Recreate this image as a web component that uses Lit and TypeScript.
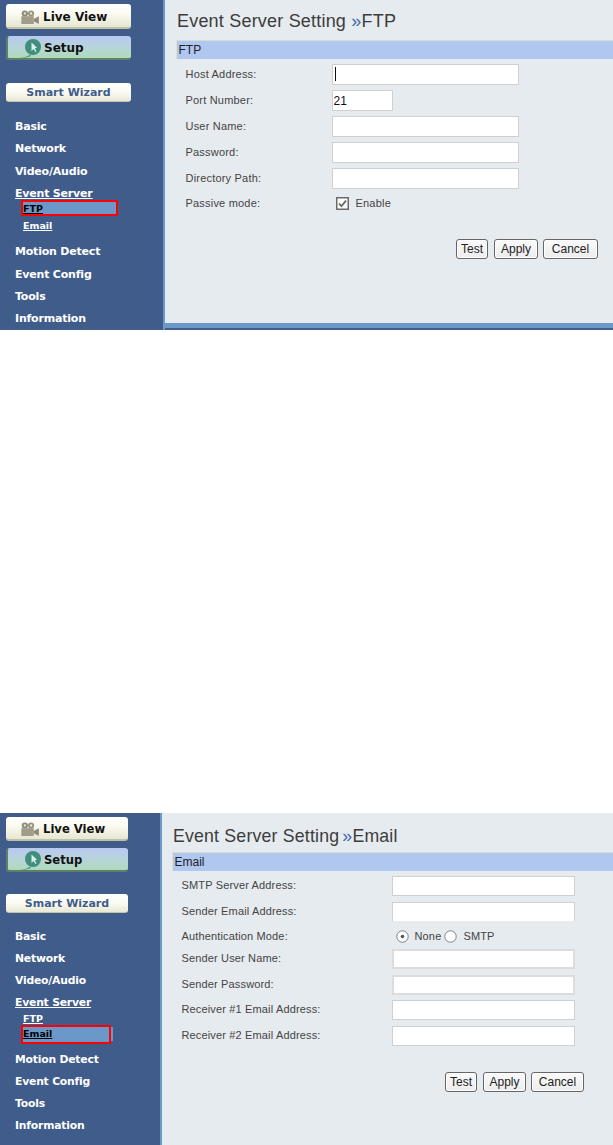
import { LitElement, html, svg, css, nothing } from "lit";
import { customElement, property } from "lit/decorators.js";

const camera = html`<svg class="ico" viewBox="0 0 24 18" width="19" height="14">
  <circle cx="6" cy="4.5" r="4" fill="#8e8a78"/><circle cx="6" cy="4.5" r="1.5" fill="#e8e8da"/>
  <circle cx="14" cy="4.5" r="4" fill="#9a9684"/><circle cx="14" cy="4.5" r="1.5" fill="#e8e8da"/>
  <rect x="1.5" y="8" width="16" height="10" fill="#a09c8a"/>
  <path d="M17.5 11.5 L24 8 V18 L17.5 14.5 Z" fill="#8e8a78"/>
</svg>`;

const setup = html`<svg class="ico" viewBox="0 0 24 20" width="24" height="20">
  <path d="M1 19 C6 19.5 9 18.5 11 16.5 L12 18 C8 20 4 20 1 19 Z" fill="#4d9a80"/>
  <circle cx="14" cy="9" r="8" fill="#3f8f7c"/>
  <path d="M12.5 4.5 L12.5 13 L14.5 11 L16.5 14 L17.5 13.2 L15.8 10.4 L18 9.8 Z" fill="#dfeee8"/>
</svg>`;

const check = html`<svg viewBox="0 0 13 13" width="13" height="13">
  <rect x="0.75" y="0.75" width="11.5" height="11.5" fill="#fff" stroke="#6a6a6a" stroke-width="1.5"/>
  <path d="M3 6.5 L5.4 9.2 L10 3.6" fill="none" stroke="#666" stroke-width="1.8"/>
</svg>`;

const radio = (on: boolean) => html`<svg viewBox="0 0 13 13" width="13" height="13">
  <circle cx="6.5" cy="6.5" r="5.7" fill="#fff" stroke="#808080"/>
  ${on ? svg`<circle cx="6.5" cy="6.5" r="1.8" fill="#555"/>` : nothing}
</svg>`;

@customElement("cam-panel")
class CamPanel extends LitElement {
  @property() page = "FTP";

  static styles = css`
    :host { display: flex; font-family: "Liberation Sans", Arial, sans-serif; background: #e6ebef; overflow: hidden; }
    :host([page="FTP"]) { height: 330px; --side: 163px; --btn: 125px; --p-top: 4px; --h1: 25px; --g1: 7px; --h2: 24px; --g2: 23px; --h3: 19px; --g3: 14px;
      --row: 22.35px; --sub-top: -5px; --sub-h1: 16px; --sub-gap: 1px; --sub-h2: 16px; --sub-after: 8px; --box: 97px; --box-h: 16px;
      --main-pad: 177px; --title-h: 40px; --title-pt: 2px; --title-fs: 18px; --title-ls: 0.2px; --b-ml: 0px; --label: 146px; --input: 187px; --input-h: 21px; --short: 61px; --bar-left: 11px; --mleft: 9px;
      --menu-fs: 11px; --live-fs: 12px; --row-h: 26px; --ls: 0.2px; --c-w: 55px; --a-w: 44px; }
    :host([page="Email"]) { height: 332px; margin-top: 483px; --side: 160px; --btn: 122px; --p-top: 4px; --h1: 24px; --g1: 7px; --h2: 24px; --g2: 22px; --h3: 19px; --g3: 13px;
      --row: 22px; --sub-top: -4px; --sub-h1: 15px; --sub-gap: 0px; --sub-h2: 19px; --sub-after: 5px; --box: 90px; --box-h: 19px;
      --main-pad: 173px; --title-h: 39px; --title-pt: 8px; --title-fs: 17.7px; --title-ls: 0.2px; --b-ml: -2px; --label: 210px; --input: 183px; --input-h: 20px; --short: 61px; --bar-left: 10px; --mleft: 9px;
      --menu-fs: 10.8px; --live-fs: 11.6px; --row-h: 25.5px; --ls: 0.15px; --c-w: 53px; --a-w: 43px; }

    .side { width: var(--side); flex: none; background: #3f5c8a; padding: var(--p-top) 0 0 6px; box-sizing: border-box; }
    .edge { width: 1.5px; flex: none; background: #6c98c9; }
    .sbtn { width: var(--btn); box-sizing: border-box; display: flex; align-items: center; border-radius: 3px; font: bold var(--live-fs) "DejaVu Sans", Verdana, sans-serif; color: #111; }
    .live { height: var(--h1); background: linear-gradient(#fff, #fbfbf2 40%, #e6e6d2); border-bottom: 2px solid #bfc0a6; padding: 2px 0 0 14px; gap: 4px; margin-bottom: var(--g1); }
    .setup { height: var(--h2); background: linear-gradient(#b9c9f2, #b6d6d6 60%, #aedab8); border-bottom: 2px solid #5f7f6c; border-left: 2px solid #5f7f6c; padding: 1px 0 0 11px; gap: 1px; margin-bottom: var(--g2); }
    .wiz { height: var(--h3); background: linear-gradient(#fff, #fbfbf2 50%, #e8e8d6); border-bottom: 1px solid #c4c4ac; color: #3f5c8a; justify-content: center; margin-bottom: var(--g3); font-size: 11px; }

    .menu { display: flex; flex-direction: column; margin-left: var(--mleft); font: bold var(--menu-fs) "DejaVu Sans", Verdana, sans-serif; letter-spacing: -0.2px; color: #fff; }
    .item { height: var(--row); line-height: var(--row); white-space: nowrap; }
    .item.u span { text-decoration: underline; }
    .sub { margin: var(--sub-top) 0 var(--sub-after) 0; display: flex; flex-direction: column; gap: var(--sub-gap); font-size: 9.5px; letter-spacing: 0; }
    .sub div { margin-left: 6px; padding-left: 2px; text-decoration: underline; display: flex; align-items: center; box-sizing: border-box; }
    .s1 { height: var(--sub-h1); padding-top: 1px; }
    .s2 { height: var(--sub-h2); }
    :host([page="Email"]) .s2 { padding-bottom: 2px; }
    .cur { position: relative; width: var(--box); background: #6c98c9; color: #000; }
    .cur::after { content: ""; position: absolute; inset: 0; border: 2px solid #f00; }
    :host([page="Email"]) .cur::before { content: ""; position: absolute; left: 100%; top: 2px; bottom: 3px; width: 2px; background: #6c98c9; }

    .main { flex: 1; min-width: 0; display: flex; flex-direction: column; }
    .title { height: var(--title-h); display: flex; align-items: center; padding-left: calc(var(--main-pad) - var(--side) - 1.5px); padding-top: var(--title-pt); box-sizing: border-box; font-size: var(--title-fs); letter-spacing: var(--title-ls); color: #3c3c3c; white-space: pre; }
    .title b { font-weight: normal; color: #3f6aa5; margin-left: var(--b-ml); }
    .bar { height: 19px; margin-left: var(--bar-left); padding-left: 2px; background: #b0c8f0; border-left: 1px solid #dfe3c8; border-top: 1px solid #d8dcd0; box-sizing: border-box; font-size: 12px; line-height: 18px; color: #222; }
    .rows { display: flex; flex-direction: column; margin: 5px 0 0 calc(var(--main-pad) - var(--side) + 7px); font-size: 11px; letter-spacing: var(--ls); color: #444; }
    .row { display: flex; align-items: center; height: var(--row-h); }
    .lab { width: var(--label); flex: none; padding-bottom: 7px; white-space: nowrap; }
    input { box-sizing: border-box; width: var(--input); height: var(--input-h); border: 1px solid #d0d0d0; background: #fff; margin: 0 0 5px 0; padding: 0 1px; font: 12px "Liberation Sans", Arial, sans-serif; color: #111; outline: none; border-radius: 0; }
    input.short { width: var(--short); }
    input.thick { border-width: 2px; border-color: #dcdcdc; }
    input.clip { border-bottom: 0; height: 19px; margin-bottom: 6px; }
    .caret { position: relative; display: flex; }
    .caret::after { content: ""; position: absolute; left: 3px; top: 3px; width: 1px; height: 14px; background: #111; }
    .opt { display: flex; align-items: center; height: 100%; padding-left: 4px; box-sizing: border-box; }
    .opt svg { flex: none; }
    .chk .lab { padding-bottom: 8px; }
    .chk .opt { padding-bottom: 8px; }
    .chk span { margin-left: 7px; font-size: 11px; }
    .auth { height: 22px; }
    .auth .lab { padding-bottom: 5px; }
    .auth .opt { padding-bottom: 4px; }
    .auth span { margin: 0 3px 0 6px; }
    .btns { display: flex; justify-content: flex-end; gap: 6px; }
    :host([page="FTP"]) .btns { margin-top: 19px; padding-right: 15px; }
    :host([page="Email"]) .btns { margin-top: 21px; padding-right: 29px; }
    button { height: 20px; padding: 0; box-sizing: border-box; border: 1px solid #666; border-radius: 3px; background: linear-gradient(#fafafa, #ececec); box-shadow: inset 0 0 0 1px #fff; font: 12px "Liberation Sans", Arial, sans-serif; color: #222; }
    .t { width: 32px; } .a { width: var(--a-w); margin-right: -1px; } .c { width: var(--c-w); }
    .spacer { flex: 1; }
    .strip { height: 7px; flex: none; background: #6c98c9; border-bottom: 2px solid #3f5c8a; box-sizing: border-box; }
  `;

  private sidebar(ftp: boolean) {
    return html`<nav class="side">
      <div class="sbtn live">${camera}<span>Live View</span></div>
      <div class="sbtn setup">${setup}<span>Setup</span></div>
      <div class="sbtn wiz">Smart Wizard</div>
      <div class="menu">
        <div class="item">Basic</div>
        <div class="item">Network</div>
        <div class="item">Video/Audio</div>
        <div class="item u"><span>Event Server</span></div>
        <div class="sub">
          <div class="s1 ${ftp ? "cur" : ""}">FTP</div>
          <div class="s2 ${ftp ? "" : "cur"}">Email</div>
        </div>
        <div class="item">Motion Detect</div>
        <div class="item">Event Config</div>
        <div class="item">Tools</div>
        <div class="item">Information</div>
      </div>
    </nav><div class="edge"></div>`;
  }

  private buttons() {
    return html`<div class="btns">
      <button class="t">Test</button><button class="a">Apply</button><button class="c">Cancel</button>
    </div>`;
  }

  private ftp() {
    return html`<div class="rows">
        <div class="row"><div class="lab">Host Address:</div><div class="caret"><input /></div></div>
        <div class="row"><div class="lab">Port Number:</div><input class="short" value="21" /></div>
        <div class="row"><div class="lab">User Name:</div><input /></div>
        <div class="row"><div class="lab">Password:</div><input /></div>
        <div class="row"><div class="lab">Directory Path:</div><input /></div>
        <div class="row chk"><div class="lab">Passive mode:</div><div class="opt">${check}<span>Enable</span></div></div>
      </div>`;
  }

  private email() {
    return html`<div class="rows">
        <div class="row"><div class="lab">SMTP Server Address:</div><input /></div>
        <div class="row"><div class="lab">Sender Email Address:</div><input class="clip" /></div>
        <div class="row auth"><div class="lab">Authentication Mode:</div><div class="opt">${radio(true)}<span>None</span>${radio(false)}<span>SMTP</span></div></div>
        <div class="row"><div class="lab">Sender User Name:</div><input class="thick" /></div>
        <div class="row"><div class="lab">Sender Password:</div><input class="thick" /></div>
        <div class="row"><div class="lab">Receiver #1 Email Address:</div><input /></div>
        <div class="row"><div class="lab">Receiver #2 Email Address:</div><input /></div>
      </div>`;
  }

  render() {
    const isFtp = this.page === "FTP";
    return html`${this.sidebar(isFtp)}
      <section class="main">
        <div class="title">Event Server Setting <b>»</b> ${this.page}</div>
        <div class="bar">${this.page}</div>
        ${isFtp ? this.ftp() : this.email()}
        ${this.buttons()}
        <div class="spacer"></div>
        ${isFtp ? html`<div class="strip"></div>` : nothing}
      </section>`;
  }
}

@customElement("app-root")
class AppRoot extends LitElement {
  static styles = css`
    :host { display: block; width: 613px; height: 1145px; background: #fff; overflow: hidden; }
    cam-panel { display: flex; }
  `;
  render() {
    return html`<cam-panel page="FTP"></cam-panel><cam-panel page="Email"></cam-panel>`;
  }
}
